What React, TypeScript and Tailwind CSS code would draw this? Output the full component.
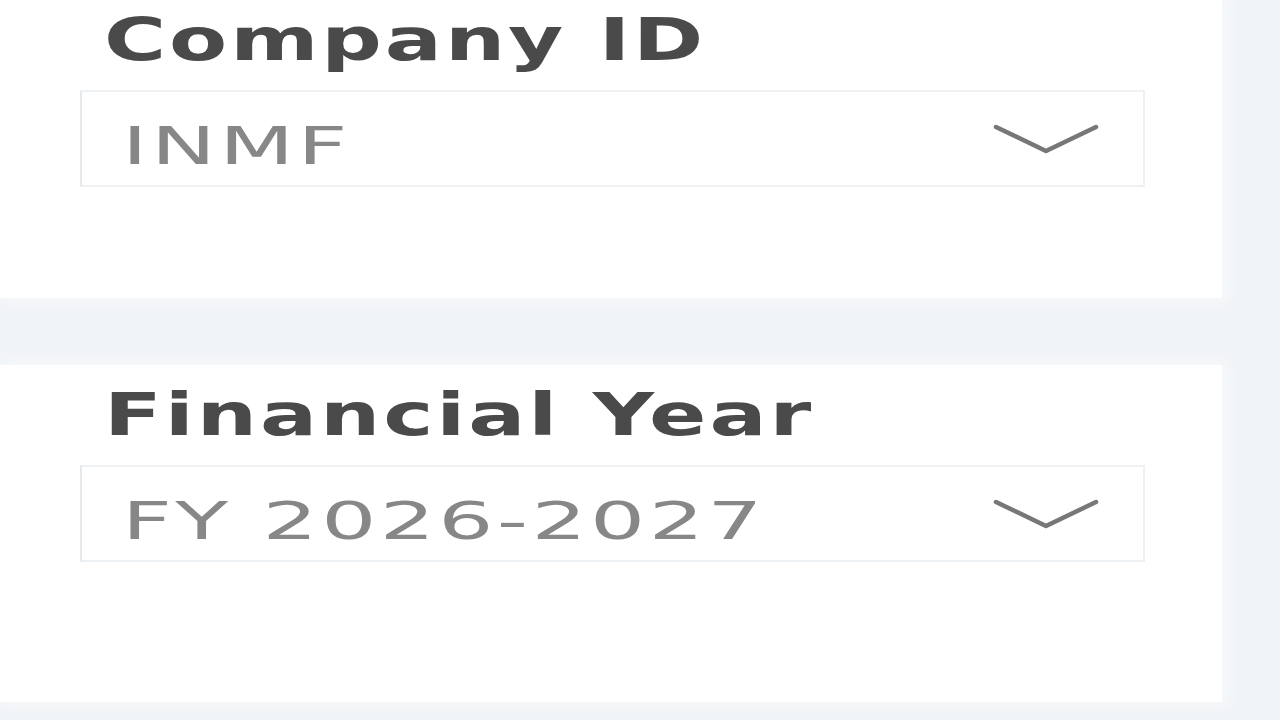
import React from 'react';

interface SelectFieldProps {
  label: string;
  value: string;
}

const Chevron: React.FC = () => (
  <svg width="108" height="34" viewBox="0 0 108 34" fill="none" className="shrink-0">
    <polyline points="4,5 54,29 104,5" stroke="#777777" strokeWidth="4.5" strokeLinecap="round" strokeLinejoin="round" />
  </svg>
);

const SelectField: React.FC<SelectFieldProps> = ({ label, value }) => (
  <div className="flex flex-col">
    <div className="pl-6 h-[58px] text-[58px] leading-none whitespace-nowrap">
      <span className="inline-block origin-left scale-x-[1.46] font-bold tracking-[2px] text-[#4a4a4a]">{label}</span>
    </div>
    <div className="mt-[21px] h-[97px] flex items-center justify-between border-2 border-[#eef1f4] border-l-[#e4e9ee] bg-white pl-[40px] pr-[43px]">
      <span className="inline-block origin-left scale-x-[1.7] pt-4 text-[51px] leading-none tracking-[2px] text-[#878787] whitespace-nowrap">
        {value}
      </span>
      <Chevron />
    </div>
  </div>
);

export default function App() {
  return (
    <div
      className="w-[1280px] h-[720px] overflow-hidden bg-[#f1f4f7] flex flex-col"
      style={{ fontFamily: '"DejaVu Sans", Verdana, sans-serif' }}
    >
      <section className="h-[298px] w-[1222px] bg-white pt-[11px] pl-[80px] pr-[77px] shadow-[4px_0_14px_rgba(250,251,252,1)]">
        <SelectField label="Company ID" value="INMF" />
      </section>
      <section className="mt-[67px] h-[337px] w-[1222px] bg-white pt-[21px] pl-[80px] pr-[77px] shadow-[4px_0_14px_rgba(250,251,252,1)]">
        <SelectField label="Financial Year" value="FY 2026-2027" />
      </section>
    </div>
  );
}
